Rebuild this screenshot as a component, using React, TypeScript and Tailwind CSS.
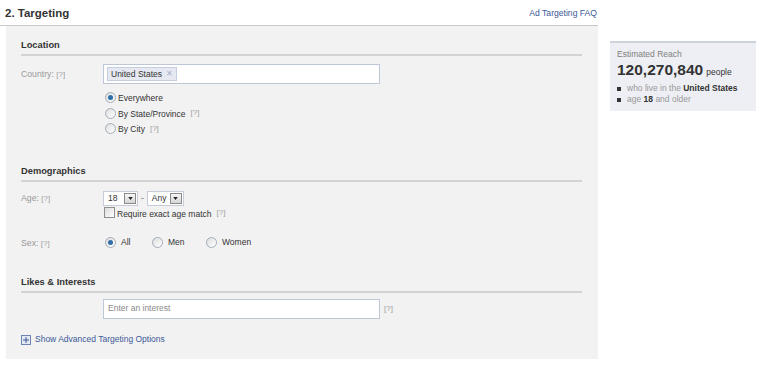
import React from "react";

const Help: React.FC<{ className?: string }> = ({ className = "" }) => (
    <span className={`text-[8px] text-[#a0a0a0] ${className}`}>[?]</span>
);

const Radio: React.FC<{ checked?: boolean }> = ({ checked }) => (
    <span className="inline-flex h-[11px] w-[11px] shrink-0 items-center justify-center rounded-full border border-[#a3acb8] bg-gradient-to-br from-[#dedede] to-white">
        {checked && <span className="h-[5px] w-[5px] rounded-full bg-[#2f6ca8]" />}
    </span>
);

const Select: React.FC<{ value: string; w: string }> = ({ value, w }) => (
    <div className={`flex h-[15px] items-center justify-between border border-[#c6cdd8] bg-white pl-[4px] pr-[1px] ${w}`}>
        <span className="text-[8.5px] text-[#333]">{value}</span>
        <span className="flex h-[11px] w-[12px] items-center justify-center border border-[#8a8a8a] bg-gradient-to-b from-[#f6f6f6] to-[#d6d6d6]">
            <svg width="5" height="3" viewBox="0 0 6 4"><path d="M0 0h6L3 4z" fill="#222" /></svg>
        </span>
    </div>
);

const SectionHead: React.FC<{ title: string }> = ({ title }) => (
    <div className="border-b-2 border-[#d3d3d3] pb-[2px] text-[9.3px] font-bold leading-[13px] text-[#333]">{title}</div>
);

const Row: React.FC<{ label?: React.ReactNode; children: React.ReactNode; className?: string }> = ({ label, children, className = "" }) => (
    <div className={`flex ${className}`}>
        <div className="w-[82px] shrink-0 text-[8.7px] leading-[14px] text-[#999]">{label}</div>
        <div className="flex-1">{children}</div>
    </div>
);

export default function App() {
    return (
        <div className="flex h-[365px] w-[762px] bg-white text-[8.5px] text-[#333]" style={{ fontFamily: "'Liberation Sans', Arial, sans-serif" }}>
            <div className="w-[598px] shrink-0">
                <div className="flex h-[26px] items-center justify-between border-b border-[#c9c9c9] pl-[5px] pt-[2px]">
                    <span className="text-[11.5px] font-bold text-[#333]">2. Targeting</span>
                    <a className="pr-[1px] text-[8.6px] text-[#3b5998]">Ad Targeting FAQ</a>
                </div>
                <div className="ml-[6px] h-[333px] bg-[#f2f2f2] pl-[15px] pr-[16px] pt-[13px]">
                    <SectionHead title="Location" />
                    <Row className="mt-[8px]" label={<div className="pt-[3px]">Country: <Help /></div>}>
                        <div className="flex h-[20px] w-[277px] items-center border border-[#bdc7d8] bg-white px-[3px]">
                            <span className="flex h-[14px] items-center gap-[4px] border border-[#c5cde0] bg-[#e6e9f1] px-[3px] text-[8.5px] text-[#333]">
                                United States <span className="text-[8px] text-[#a9b2c6]">✕</span>
                            </span>
                        </div>
                        <div className="mt-[6px] flex flex-col pl-[2px]">
                            <label className="flex h-[15.5px] items-center gap-[2px]"><Radio checked /><span className="mt-[2px]">Everywhere</span></label>
                            <label className="flex h-[15.5px] items-center gap-[2px]"><Radio /><span className="mt-[2px]">By State/Province</span><Help className="ml-[3px]" /></label>
                            <label className="flex h-[15.5px] items-center gap-[2px]"><Radio /><span className="mt-[2px]">By City</span><Help className="ml-[3px]" /></label>
                        </div>
                    </Row>

                    <div className="mt-[28px]"><SectionHead title="Demographics" /></div>
                    <Row className="mt-[9px]" label={<div className="leading-[15px]">Age: <Help /></div>}>
                        <div className="flex items-center gap-[3px]">
                            <Select value="18" w="w-[35px]" />
                            <span className="text-[#666]">-</span>
                            <Select value="Any" w="w-[37px]" />
                        </div>
                        <label className="flex h-[14px] items-center gap-[2px] pl-[1px]">
                            <span className="h-[11px] w-[11px] border border-[#8f8f8f] bg-gradient-to-br from-[#dcdcdc] to-white" />
                            <span className="mt-[3px]">Require exact age match</span>
                            <Help className="ml-[3px] mt-[1px]" />
                        </label>
                    </Row>
                    <Row className="mt-[16px]" label={<div>Sex: <Help /></div>}>
                        <div className="flex h-[14px] items-center pl-[2px]">
                            <label className="flex w-[47px] items-center gap-[5px]"><Radio checked /><span>All</span></label>
                            <label className="flex w-[54px] items-center gap-[5px]"><Radio /><span>Men</span></label>
                            <label className="flex items-center gap-[5px]"><Radio /><span>Women</span></label>
                        </div>
                    </Row>

                    <div className="mt-[25px]"><SectionHead title="Likes & Interests" /></div>
                    <Row className="mt-[6px]">
                        <div className="flex items-center gap-[4px]">
                            <div className="flex h-[20px] w-[277px] items-center border border-[#bdc7d8] bg-white px-[4px] text-[8.5px] text-[#8a8a8a]">Enter an interest</div>
                            <Help />
                        </div>
                    </Row>
                    <div className="mt-[15px] flex h-[12px] items-center gap-[4px]">
                        <span className="flex h-[10px] w-[10px] items-center justify-center border border-[#6d84b4] bg-[#e4e9f3]">
                            <svg width="6" height="6" viewBox="0 0 6 6"><path d="M2.5 0h1v2.5H6v1H3.5V6h-1V3.5H0v-1h2.5z" fill="#3b5998" /></svg>
                        </span>
                        <a className="text-[8.5px] text-[#3b5998]">Show Advanced Targeting Options</a>
                    </div>
                </div>
            </div>

            <div className="ml-[12px] mt-[41px] h-[70px] w-[146px] border-t-2 border-[#cdd3de] bg-[#edeff4] px-[7px] pt-[5px]">
                <div className="text-[8.5px] leading-[12px] text-[#808080]">Estimated Reach</div>
                <div className="flex items-baseline gap-[3px] leading-[20px]">
                    <span className="text-[15.5px] font-bold text-[#333]">120,270,840</span>
                    <span className="text-[8.5px] text-[#333]">people</span>
                </div>
                <div className="mt-[1px] flex items-center gap-[6px] text-[8.5px] leading-[11px] text-[#999]">
                    <span className="h-[4px] w-[4px] shrink-0 bg-[#333]" />
                    <span className="whitespace-nowrap">who live in the <b className="text-[#333]">United States</b></span>
                </div>
                <div className="flex items-center gap-[6px] text-[8.5px] leading-[11px] text-[#999]">
                    <span className="h-[4px] w-[4px] shrink-0 bg-[#333]" />
                    <span>age <b className="text-[#333]">18</b> and older</span>
                </div>
            </div>
        </div>
    );
}
